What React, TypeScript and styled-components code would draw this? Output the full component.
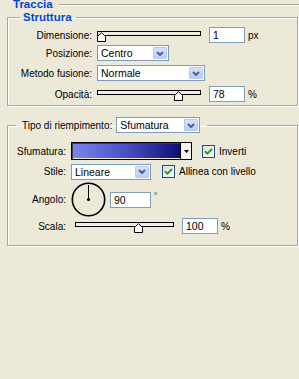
import React from "react";
import styled, { createGlobalStyle } from "styled-components";

const GlobalStyle = createGlobalStyle`
  html, body {
    margin: 0;
    padding: 0;
    background: #ece9d8;
  }
  body {
    font-family: "Liberation Sans", Arial, sans-serif;
    font-size: 10px;
    color: #000;
  }
`;

const Page = styled.div`
  width: 299px;
  height: 379px;
  box-sizing: border-box;
  padding: 0 1px 0 7px;
  overflow: hidden;
  background: #ece9d8;
`;

const Header = styled.div`
  display: flex;
  align-items: center;
  height: 13px;
  margin: -2px -1px 0 6px;
`;

const Title = styled.span`
  font-weight: bold;
  font-size: 11.5px;
  line-height: 13px;
  color: #0046d5;
`;

const Rule = styled.div`
  flex: 1;
  margin-left: 6px;
  border-top: 1px solid #aca899;
  border-bottom: 1px solid #fff;
`;

const Group = styled.fieldset<{ $top: number; $padTop: number; $padBottom: number }>`
  margin: ${(p) => p.$top}px 0 0;
  padding: ${(p) => p.$padTop}px 0 ${(p) => p.$padBottom}px;
  border: 1px solid #aca899;
  box-shadow: inset 1px 1px 0 #fff, 1px 1px 0 #fff;
  min-width: 0;
`;

const Legend = styled.legend<{ $ml: number; $pl: number; $pr: number }>`
  margin-left: ${(p) => p.$ml}px;
  padding: 0 ${(p) => p.$pr}px 0 ${(p) => p.$pl}px;
  line-height: 13px;
`;

const LegendRow = styled.div`
  display: flex;
  align-items: center;
  gap: 4px;
`;

const Row = styled.div<{ $h: number }>`
  display: flex;
  align-items: center;
  height: ${(p) => p.$h}px;
`;

const Label = styled.span<{ $w: number }>`
  width: ${(p) => p.$w}px;
  margin-right: 5px;
  text-align: right;
  white-space: nowrap;
`;

const SliderBox = styled.div<{ $w: number; $ml?: number }>`
  position: relative;
  width: ${(p) => p.$w}px;
  height: 10px;
  margin-left: ${(p) => p.$ml ?? 0}px;
  margin-right: 8px;
  align-self: center;
  transform: translateY(1px);
`;

const Track = styled.div`
  height: 5px;
  box-sizing: border-box;
  border: 1px solid #000;
  background: #efede2;
`;

const Thumb = styled.svg`
  position: absolute;
  top: 1px;
  width: 9px;
  height: 10px;
`;

const NumInput = styled.input<{ $w: number }>`
  width: ${(p) => p.$w}px;
  height: 16px;
  box-sizing: border-box;
  border: 1px solid #7f9db9;
  background: #fff;
  padding: 0 3px;
  margin: 0;
  font: inherit;
  font-size: 10.5px;
  color: #000;
  outline: none;
`;

const Unit = styled.span<{ $sup?: boolean }>`
  margin-left: 3px;
  align-self: ${(p) => (p.$sup ? "flex-start" : "center")};
  margin-top: ${(p) => (p.$sup ? "9px" : "0")};
  font-size: ${(p) => (p.$sup ? "8px" : "10px")};
`;

const SelectBox = styled.div<{ $w: number }>`
  display: flex;
  align-items: stretch;
  width: ${(p) => p.$w}px;
  height: 16px;
  box-sizing: border-box;
  border: 1px solid #7f9db9;
  background: #fff;
`;

const SelectValue = styled.span`
  flex: 1;
  padding-left: 3px;
  line-height: 14px;
  font-size: 10.5px;
`;

const ArrowBtn = styled.span`
  display: flex;
  align-items: center;
  justify-content: center;
  width: 14px;
  margin: 1px;
  border-radius: 1px;
  background: linear-gradient(#d6e2fd, #b9cdf8);
  border: 1px solid #b6c9f3;
  box-sizing: border-box;
`;

const CheckWrap = styled.span<{ $ml: number }>`
  display: flex;
  align-items: center;
  margin-left: ${(p) => p.$ml}px;
`;

const CheckBox = styled.span`
  display: flex;
  align-items: center;
  justify-content: center;
  width: 13px;
  height: 13px;
  box-sizing: border-box;
  border: 1px solid #1c5180;
  background: linear-gradient(135deg, #dcdbd3, #fff);
  margin-right: 4px;
`;

const GradientPicker = styled.div`
  display: flex;
  width: 121px;
  height: 18px;
  box-sizing: border-box;
  border: 1px solid #000;
  box-shadow: inset 1px 1px 0 #404040;
`;

const GradientSwatch = styled.div`
  flex: 1;
  margin: 1px 0 1px 1px;
  background: linear-gradient(to right, #7c84ec, #4a4fc4 50%, #0e0e74);
`;

const GradientArrow = styled.div`
  display: flex;
  align-items: center;
  justify-content: center;
  width: 10px;
  border-left: 1px solid #000;
  background: #f4f3ec;
`;

const Dial = styled.svg`
  width: 35px;
  height: 35px;
  margin-right: 4px;
`;

const Chevron = () => (
  <svg width="8" height="5" viewBox="0 0 8 5">
    <path d="M1 1 L4 4 L7 1" fill="none" stroke="#4d6185" strokeWidth="2" />
  </svg>
);

const Select: React.FC<{ w: number; value: string }> = ({ w, value }) => (
  <SelectBox $w={w}>
    <SelectValue>{value}</SelectValue>
    <ArrowBtn>
      <Chevron />
    </ArrowBtn>
  </SelectBox>
);

const Slider: React.FC<{ w: number; pos: number; ml?: number }> = ({ w, pos, ml }) => (
  <SliderBox $w={w} $ml={ml}>
    <Track />
    <Thumb viewBox="0 0 9 10" style={{ left: Math.max(0, pos * w - 4.5) }}>
      <path d="M0.5 9.5 V4.5 L4.5 0.7 L8.5 4.5 V9.5 Z" fill="#fff" stroke="#000" />
    </Thumb>
  </SliderBox>
);

const Check: React.FC<{ label: string; ml: number }> = ({ label, ml }) => (
  <CheckWrap $ml={ml}>
    <CheckBox>
      <svg width="9" height="9" viewBox="0 0 9 9">
        <path d="M1 4.2 L3.4 6.6 L8 2" fill="none" stroke="#21a121" strokeWidth="2" />
      </svg>
    </CheckBox>
    {label}
  </CheckWrap>
);

export default function App() {
  return (
    <Page>
      <GlobalStyle />
      <Header>
        <Title>Traccia</Title>
        <Rule />
      </Header>

      <Group $top={0} $padTop={2} $padBottom={1}>
        <Legend $ml={12} $pl={3} $pr={4}>
          <Title>Struttura</Title>
        </Legend>
        <Row $h={18}>
          <Label $w={84}>Dimensione:</Label>
          <Slider w={104} pos={0} />
          <NumInput $w={36} defaultValue="1" readOnly />
          <Unit>px</Unit>
        </Row>
        <Row $h={18}>
          <Label $w={84}>Posizione:</Label>
          <Select w={72} value="Centro" />
        </Row>
        <Row $h={22}>
          <Label $w={84}>Metodo fusione:</Label>
          <Select w={108} value="Normale" />
        </Row>
        <Row $h={20}>
          <Label $w={84}>Opacità:</Label>
          <Slider w={104} pos={0.78} />
          <NumInput $w={36} defaultValue="78" readOnly />
          <Unit>%</Unit>
        </Row>
      </Group>

      <Group $top={11} $padTop={8} $padBottom={10}>
        <Legend $ml={8} $pl={6} $pr={7}>
          <LegendRow>
            <span>Tipo di riempimento:</span>
            <Select w={84} value="Sfumatura" />
          </LegendRow>
        </Legend>
        <Row $h={20}>
          <Label $w={58}>Sfumatura:</Label>
          <GradientPicker>
            <GradientSwatch />
            <GradientArrow>
              <svg width="5" height="3" viewBox="0 0 5 3">
                <path d="M0 0 H5 L2.5 3 Z" fill="#000" />
              </svg>
            </GradientArrow>
          </GradientPicker>
          <Check label="Inverti" ml={10} />
        </Row>
        <Row $h={21}>
          <Label $w={58}>Stile:</Label>
          <Select w={80} value="Lineare" />
          <Check label="Allinea con livello" ml={11} />
        </Row>
        <Row $h={35}>
          <Label $w={58}>Angolo:</Label>
          <Dial viewBox="0 0 35 35">
            <circle cx="17.5" cy="17.5" r="16.2" fill="none" stroke="#000" strokeWidth="1.6" />
            <line x1="17.5" y1="17.5" x2="17.5" y2="3" stroke="#000" strokeWidth="1" />
            <circle cx="17.5" cy="17.5" r="1.6" fill="#000" />
          </Dial>
          <NumInput $w={41} defaultValue="90" readOnly />
          <Unit $sup>°</Unit>
        </Row>
        <Row $h={18}>
          <Label $w={58}>Scala:</Label>
          <Slider w={99} pos={0.64} ml={4} />
          <NumInput $w={36} defaultValue="100" readOnly />
          <Unit>%</Unit>
        </Row>
      </Group>
    </Page>
  );
}
